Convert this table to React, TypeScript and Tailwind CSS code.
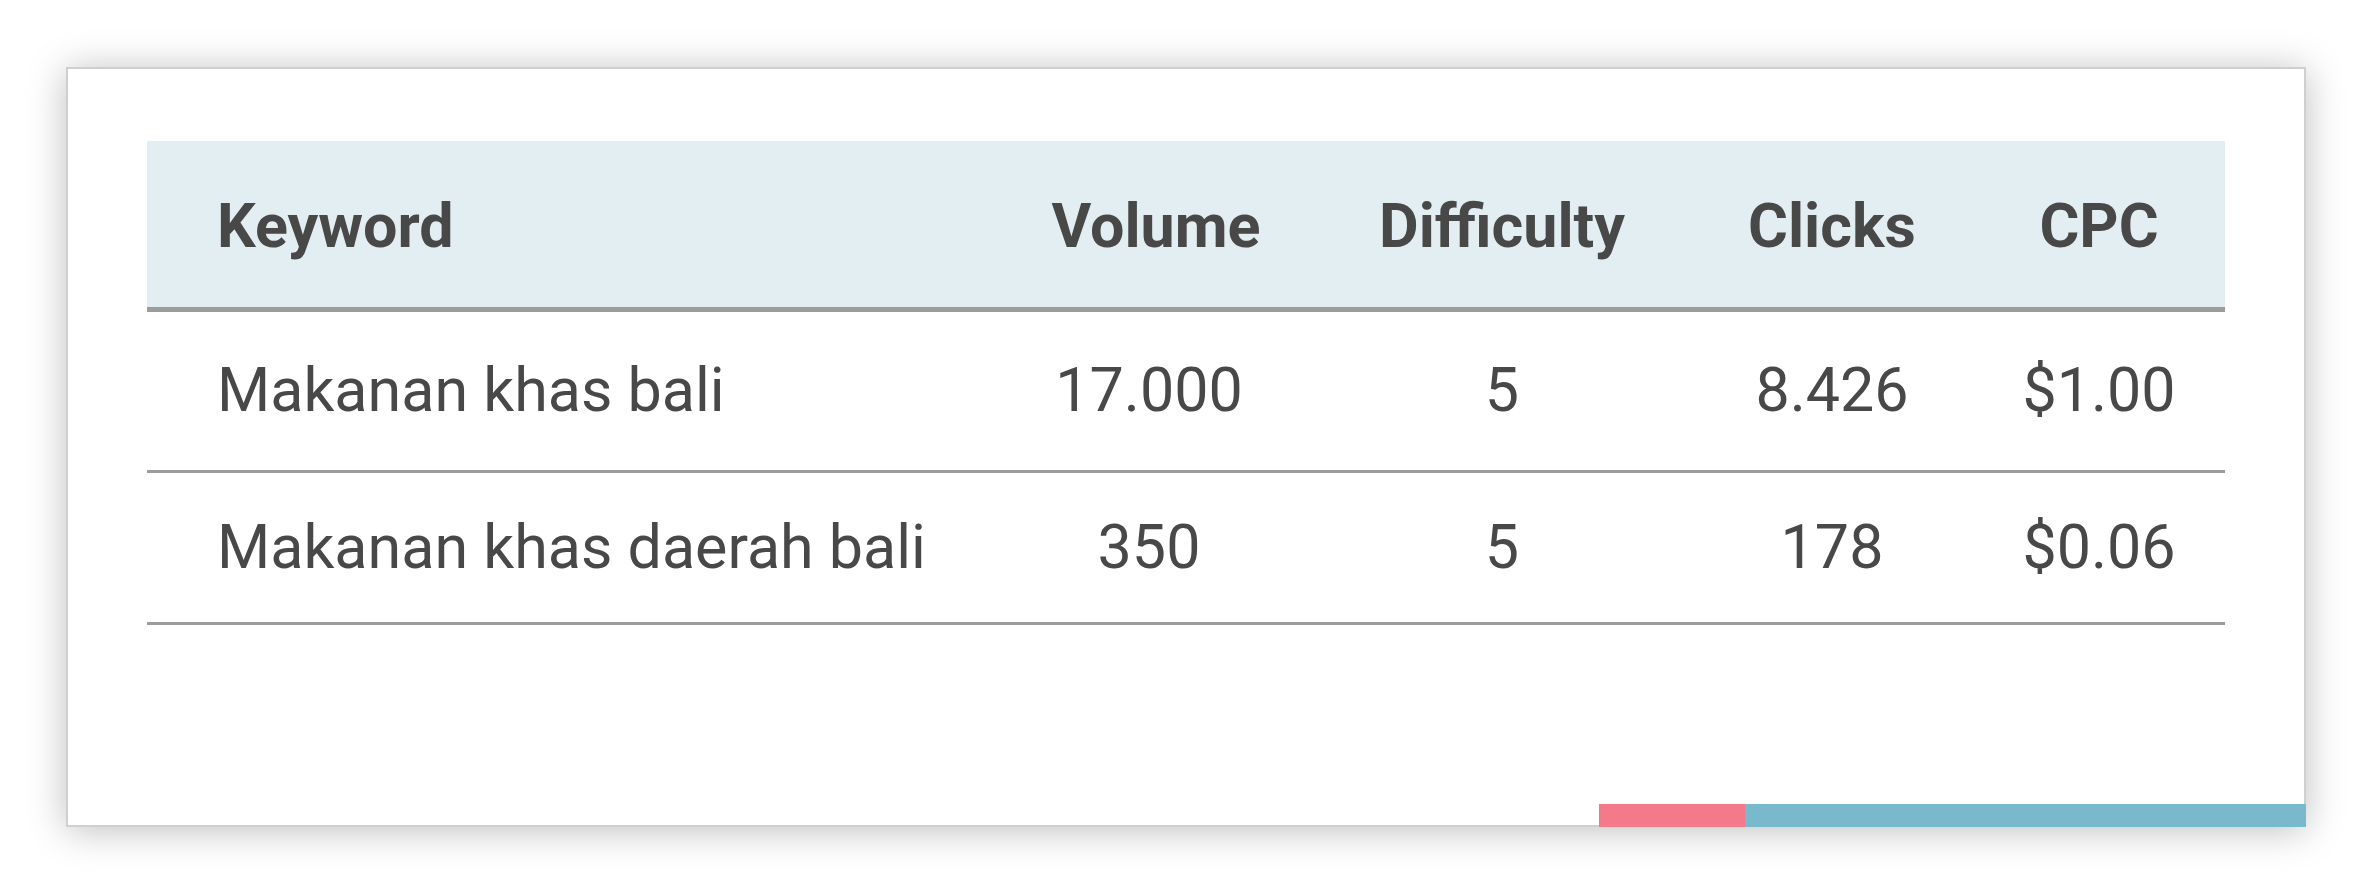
import React from "react";

const rows = [
  { k: "Makanan khas bali", v: "17.000", d: "5", c: "8.426", p: "$1.00", h: "h-[158px]" },
  { k: "Makanan khas daerah bali", v: "350", d: "5", c: "178", p: "$0.06", h: "h-[149px]" },
];

const cols = "grid grid-cols-[844px_322px_378px_282px_252px] items-center";

export default function App() {
  return (
    <div className="min-h-[894px] w-[2373px] bg-white pl-[66px] pt-[67px] font-['Roboto',sans-serif] text-[#484848]">
      <div className="flex h-[760px] w-[2240px] flex-col border-2 border-[#cfcfcf] bg-white shadow-[0_3px_36px_rgba(0,0,0,0.26)]">
        <div className="pl-[79px] pt-[72px]">
          <div className="w-[2078px]">
            <div className={`${cols} h-[171px] border-b-[5px] border-[#9c9c9c] bg-[#e3eef2] pt-[6px] text-[61px] font-bold`}>
              <div className="pl-[70px]">Keyword</div>
              <div className="pl-[8px] text-center">Volume</div>
              <div className="text-center">Difficulty</div>
              <div className="text-center">Clicks</div>
              <div className="text-center">CPC</div>
            </div>
            {rows.map((r) => (
              <div key={r.k} className={`${cols} ${r.h} box-content border-b-[3px] border-[#9c9c9c] text-[61px] font-normal`}>
                <div className="pl-[70px]">{r.k}</div>
                <div className="pr-[6px] text-center">{r.v}</div>
                <div className="text-center">{r.d}</div>
                <div className="text-center">{r.c}</div>
                <div className="text-center">{r.p}</div>
              </div>
            ))}
          </div>
        </div>
        <div className="flex-1" />
        <div className="mb-[-2px] mr-[-2px] flex justify-end">
          <div className="h-[23px] w-[146px] bg-[#f27a89]" />
          <div className="h-[23px] w-[561px] bg-[#79b9cc]" />
        </div>
      </div>
    </div>
  );
}
